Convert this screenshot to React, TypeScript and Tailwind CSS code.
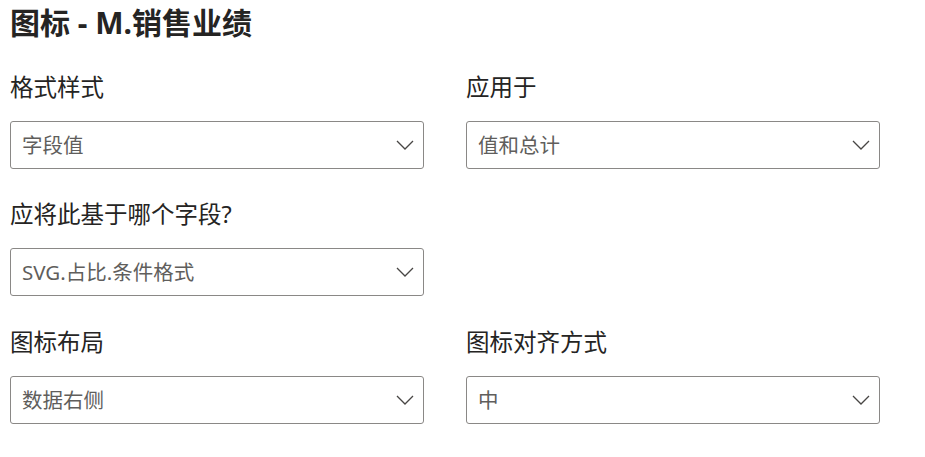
const font = { fontFamily: '"Noto Sans", "Noto Sans CJK SC", sans-serif' };

function Field({ label, value }: { label: string; value: string }) {
  return (
    <div className="flex w-[414px] flex-col">
      <div className="h-[30px] text-[23.5px] leading-[30px] text-[#252423]">{label}</div>
      <div className="mt-[19px] flex h-[48px] items-center justify-between rounded-[3px] border border-[#8a8886] bg-white pl-[11px] pr-[9px]">
        <span className="text-[20.5px] text-[#605e5c]">{value}</span>
        <svg width="18" height="10" viewBox="0 0 18 10" fill="none" className="text-[#484644]">
          <path d="M1 1 L9 9 L17 1" stroke="currentColor" strokeWidth="1.3" />
        </svg>
      </div>
    </div>
  );
}

export default function App() {
  return (
    <div className="min-h-[457px] bg-white pl-[10px] pt-[5px]" style={font}>
      <h1 className="h-[36px] text-[30px] font-bold leading-[36px] text-[#252423]">
        图标 - M.销售业绩
      </h1>
      <div className="mt-[31px] flex flex-col">
        <div className="flex gap-[42px]">
          <Field label="格式样式" value="字段值" />
          <Field label="应用于" value="值和总计" />
        </div>
        <div className="mt-[30px] flex gap-[42px]">
          <Field label="应将此基于哪个字段?" value="SVG.占比.条件格式" />
        </div>
        <div className="mt-[31px] flex gap-[42px]">
          <Field label="图标布局" value="数据右侧" />
          <Field label="图标对齐方式" value="中" />
        </div>
      </div>
    </div>
  );
}
